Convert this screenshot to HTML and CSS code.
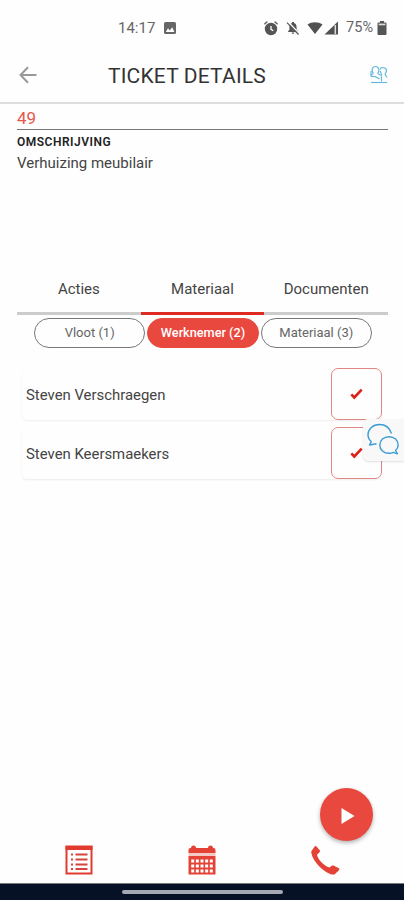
FILE: index.html
```
<!DOCTYPE html>
<html lang="nl">
<head>
    <meta charset="UTF-8">
    <meta name="viewport" content="width=device-width, initial-scale=1.0">
    <title>Ticket details</title>
    <link rel="stylesheet" href="styles.css">
</head>
<body>
    <div class="screen">
        <div class="status-bar">
            <span class="time">14:17</span>
            <svg class="icon-image" width="12" height="12" viewBox="0 0 12 12">
                <rect width="12" height="12" rx="1.5" fill="#666"/>
                <path d="M1.8 10 4 6.2l1.8 2.2 2.4-3.2 2.2 4.8z" fill="#fff"/>
            </svg>
            <div class="status-icons">
                <svg width="16" height="16" viewBox="0 0 16 16">
                    <circle cx="8" cy="9" r="5.5" fill="#555" stroke="#555" stroke-width="1.4"/>
                    <path d="M1.3 4.3 4.4 1.6M14.7 4.3l-3.1-2.7" stroke="#666" stroke-width="1.4"/>
                    <path d="M8 6v3.3l2.3 1.4" fill="none" stroke="#fff" stroke-width="1.3"/>
                </svg>
                <svg width="14" height="16" viewBox="0 0 14 16">
                    <path d="M2.2 12V11l1.2-1.2V7C3.4 4.800 4.600 3.400 6 3V2h2v1c1.500.4 2.600 1.800 2.600 4v2.800L12 11v1zM5.700 12.600h2.600c0 .8-.6 1.300-1.300 1.300s-1.300-.5-1.300-1.300z" fill="#555"/>
                    <path d="M2 1.8 13 13.5" stroke="#fff" stroke-width="1.5"/>
                    <path d="M1 2.6 12.600 14.500" stroke="#555" stroke-width="1.2"/>
                </svg>
                <svg width="16" height="16" viewBox="0 0 16 16">
                    <path d="M.5 4.500C4.800 1.500 11.200 1.500 15.500 4.500L8 14z" fill="#505050"/>
                </svg>
                <svg class="icon-signal" width="15" height="16" viewBox="0 0 15 16">
                    <path d="M.5 14.500 14 1.500v13z" fill="#505050"/>
                    <path d="M11.300 5v9" stroke="#ddd" stroke-width="1.5"/>
                </svg>
                <span class="battery-text">75%</span>
                <svg width="10" height="16" viewBox="0 0 10 16">
                    <path d="M3 1h4v1.500h1.500q1 0 1 1V14q0 1-1 1h-7q-1 0-1-1V3.500q0-1 1-1H3z" fill="#555"/>
                    <rect x="1.700" y="3.600" width="6.600" height="1.700" fill="#ddd"/>
                </svg>
            </div>
        </div>

        <header class="header">
            <svg class="icon-back" width="18" height="18" viewBox="0 0 18 18">
                <path d="M17.500 9H2M9 1.200 1.500 9 9 16.800" fill="none" stroke="#999" stroke-width="2"/>
            </svg>
            <h1 class="title">TICKET DETAILS</h1>
            <svg class="icon-users" width="18" height="20" viewBox="0 0 18 20">
                <g fill="none" stroke="#64b9dc" stroke-width="1.2">
                    <path d="M1 10.500c1-1.500 2.500-1.200 2-2.500C1 4.500 2.500 1.500 5.500 1.500S10 4.500 8 8c-.6 1.300 2 1 3.500 3"/>
                    <path d="M10 4.500c1-2.500 6.500-2.500 6.500 1 0 2.500-2 3-1.200 4.500.5 1 1.500 1 1.700 2.500M10.500 6c0 2 1.300 2.500 1 4M11.500 11v5.500"/>
                    <path d="M1 6v5c2 1.500 3-.5 5 1 1.500 1.200 2.500 1 3.500 2.200"/>
                    <path d="M1 17.500h16"/>
                </g>
            </svg>
        </header>

        <main class="content">
            <div class="ticket-number">49</div>
            <div class="description">
                <div class="label">OMSCHRIJVING</div>
                <div class="text">Verhuizing meubilair</div>
            </div>

            <div class="tabs">
                <div class="tab">Acties</div>
                <div class="tab active">Materiaal</div>
                <div class="tab">Documenten</div>
            </div>

            <div class="pills">
                <div class="pill">Vloot (1)</div>
                <div class="pill selected">Werknemer (2)</div>
                <div class="pill">Materiaal (3)</div>
            </div>

            <div class="list">
                <div class="card">
                    <span class="name">Steven Verschraegen</span>
                    <div class="check">
                        <svg width="13" height="12" viewBox="0 0 13 12">
                            <path d="M1.300 6.300 4.300 9.500 11.700 1.700" fill="none" stroke="#dc2118" stroke-width="2.600"/>
                        </svg>
                    </div>
                </div>
                <div class="card">
                    <span class="name">Steven Keersmaekers</span>
                    <div class="check">
                        <svg width="13" height="12" viewBox="0 0 13 12">
                            <path d="M1.300 6.300 4.300 9.500 11.700 1.700" fill="none" stroke="#dc2118" stroke-width="2.600"/>
                        </svg>
                    </div>
                </div>
            </div>
        </main>

        <div class="chat">
            <svg width="34" height="34" viewBox="0 0 34 34">
                <g fill="none" stroke="#3a9bd5" stroke-width="1.4" stroke-linejoin="round">
                    <path d="M26.500 11.500C24.500 5.500 20 2.500 14.500 2.500 8 2.500 3 7 3 12.500c0 3 1.300 5.500 3.300 7.200L4.500 23l7-1.200"/>
                    <path d="M30.500 28.500c1.700-1.600 2.700-3.500 2.700-5.500 0-4.700-4-8.300-9.200-8.300s-9.200 3.600-9.200 8.300 4 8.300 9.200 8.300c1.600 0 3-.3 4.300-.9l4.200 1.400z"/>
                </g>
            </svg>
        </div>

        <div class="play">
            <svg width="14" height="18" viewBox="0 0 14 18">
                <path d="M.5 1 13.500 9 .5 17z" fill="#fff"/>
            </svg>
        </div>

        <footer class="bottom-nav">
            <div class="nav-item">
                <svg width="28" height="30" viewBox="0 0 28 30">
                    <rect x="1.500" y="1.500" width="25" height="27" fill="#fff" stroke="#e23a2e" stroke-width="2"/>
                    <path d="M.5 3h27" stroke="#e23a2e" stroke-width="4"/>
                    <path d="M6 9.500h2M6 14.500h2M6 19.500h2M6 24h2M10.500 9.500h12M10.500 14.500h12M10.500 19.500h12M10.500 24h12" stroke="#d6453c" stroke-width="2.200"/>
                </svg>
            </div>
            <div class="nav-item">
                <svg width="28" height="30" viewBox="0 0 28 30">
                    <path d="M.5 5q0-2 2-2H3q0-2.500 2.500-2.500T8 3h12q0-2.500 2.500-2.500T25 3h.5q2 0 2 2v3H.5zM.5 11h27v18.500H.5z" fill="#e54237"/>
                    <path d="M.5 9.500h27" stroke="#f6c9c4" stroke-width="3"/>
                    <path d="M3.200 16h22M3.200 21h22M3.200 26h22" stroke="#fff" stroke-width="3" stroke-dasharray="3 1.650"/>
                </svg>
            </div>
            <div class="nav-item">
                <svg width="30" height="30" viewBox="0 0 30 30">
                    <path d="M1.200 6.500 5 1l1.300.2 3.700 4.300-.2 1.500-2.800 2.800c.8 4.500 7 11.300 12.500 12.700l2.600-1.900 1.500-.1 5.700 3-.1 1.500-4.700 4.400c-2 .8-6.500-1-10.500-4C6.500 19.800 1.500 12.500 1.200 6.500z" fill="#e54237"/>
                </svg>
            </div>
        </footer>

        <div class="system-bar">
            <div class="handle"></div>
        </div>
    </div>
</body>
</html>
```
FILE: styles.css
```
body {
    margin: 0;
    background-color: #fefefe;
    color: #444;
    font-family: Roboto, "Liberation Sans", sans-serif;
}

svg {
    display: block;
    flex-shrink: 0;
}

.screen {
    position: relative;
    display: flex;
    flex-direction: column;
    width: 404px;
    height: 900px;
    overflow: hidden;
}

.status-bar {
    display: flex;
    align-items: center;
    height: 55px;
    padding: 0 17px 0 118px;
    box-sizing: border-box;
    font-size: 15px;
    color: #666;
}

.time {
    width: 37px;
    white-space: nowrap;
}

.icon-image {
    margin-left: 9px;
}

.status-icons {
    display: flex;
    align-items: center;
    gap: 7px;
    margin-left: auto;
}

.icon-signal {
    margin-left: -6px;
}

.battery-text {
    margin-right: -3px;
    font-size: 14.5px;
}

.header {
    display: flex;
    align-items: center;
    height: 49px;
    padding: 0 16px 7px 19px;
    box-sizing: border-box;
    border-bottom: 2px solid #ddd;
}

.title {
    margin: 0 auto 0 71px;
    padding-top: 1px;
    font-size: 21px;
    font-weight: 400;
    letter-spacing: 0.18px;
    line-height: 24px;
    color: #333;
}

.content {
    flex: 1;
    padding: 5px 16px 0 17px;
}

.ticket-number {
    height: 20px;
    border-bottom: 1px solid #777;
    font-size: 17px;
    line-height: 18px;
    color: #e8574d;
}

.description {
    height: 141px;
    padding-top: 4px;
    box-sizing: border-box;
}

.label {
    font-size: 12px;
    font-weight: 600;
    letter-spacing: 0.5px;
    line-height: 16px;
    color: #222;
}

.text {
    margin-top: 4px;
    font-size: 15px;
    line-height: 18px;
}

.tabs {
    display: flex;
    height: 44px;
}

.tab {
    flex: 1;
    border-bottom: 3px solid #ccc;
    font-size: 15px;
    line-height: 37px;
    text-align: center;
}

.tab.active {
    border-bottom-color: #dd2a23;
}

.pills {
    display: flex;
    gap: 2px;
    margin: 3px 16px 0 17px;
}

.pill {
    flex: 1;
    height: 30px;
    border: 1px solid #777;
    border-radius: 15px;
    box-sizing: border-box;
    font-size: 13px;
    line-height: 28px;
    text-align: center;
    color: #666;
}

.pill.selected {
    border-color: #e9483e;
    background-color: #e9483e;
    color: #fff;
    font-size: 12.7px;
    font-weight: 500;
}

.list {
    display: flex;
    flex-direction: column;
    gap: 7px;
    margin: 20px 6px 0 5px;
}

.card {
    display: flex;
    align-items: center;
    justify-content: space-between;
    height: 52px;
    padding-left: 4px;
    border-radius: 5px;
    box-shadow: 0 1px 2px rgba(0, 0, 0, 0.07);
}

.name {
    padding-top: 2px;
    font-size: 14.9px;
}

.check {
    display: flex;
    align-items: center;
    justify-content: center;
    width: 51px;
    height: 52px;
    border: 1px solid #e08783;
    border-radius: 7px;
    box-sizing: border-box;
}

.chat {
    position: absolute;
    top: 419px;
    right: 0;
    display: flex;
    align-items: center;
    justify-content: center;
    width: 41px;
    height: 42px;
    padding-right: 3px;
    padding-bottom: 2px;
    box-sizing: border-box;
    border-radius: 5px 0 0 5px;
    background-color: #f8f8f8;
    box-shadow: 0 1px 2px rgba(0, 0, 0, 0.12);
}

.play {
    position: absolute;
    right: 31px;
    bottom: 59px;
    display: flex;
    align-items: center;
    justify-content: center;
    width: 53px;
    height: 53px;
    padding-left: 3px;
    padding-top: 3px;
    box-sizing: border-box;
    border-radius: 50%;
    background-color: #e9483e;
    box-shadow: 0 2px 4px rgba(0, 0, 0, 0.3);
}

.bottom-nav {
    display: flex;
    align-items: center;
    padding: 0 17px 8px;
}

.nav-item {
    display: flex;
    flex: 1;
    justify-content: center;
}

.system-bar {
    display: flex;
    justify-content: center;
    height: 17px;
    padding-top: 6px;
    box-sizing: border-box;
    border-top: 1px solid #777b76;
    background-color: #071126;
}

.handle {
    width: 161px;
    height: 4px;
    border-radius: 2px;
    background-color: #a5a9b4;
}
```
